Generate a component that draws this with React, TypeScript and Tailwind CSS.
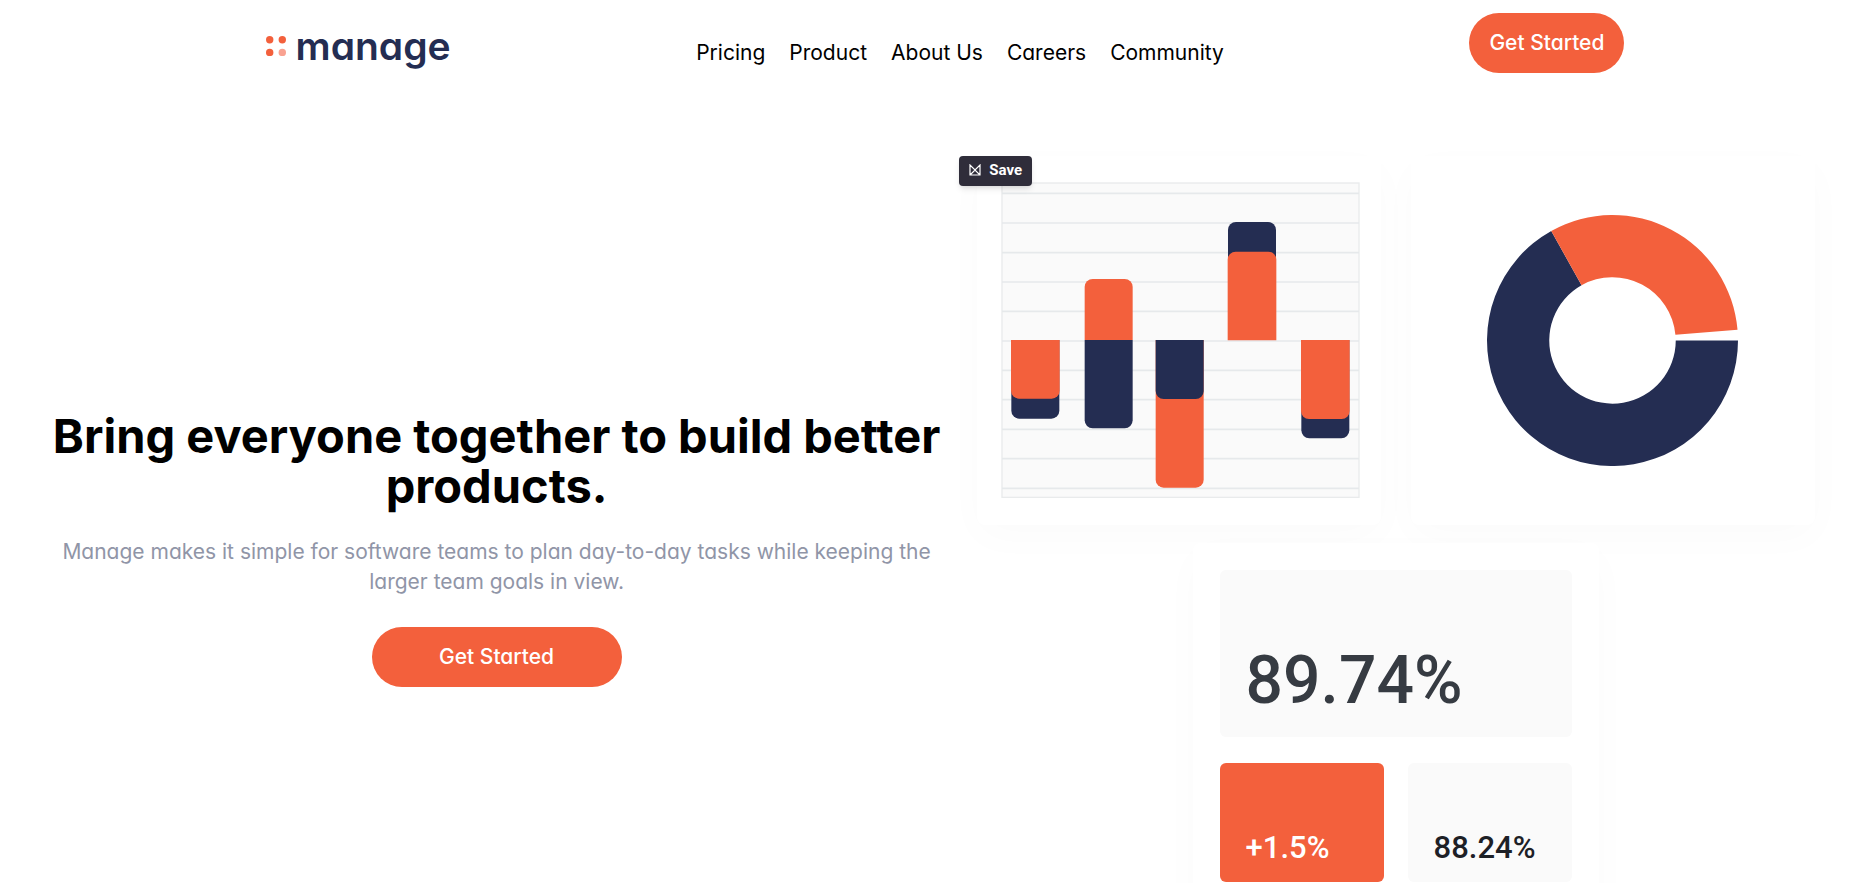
import type { ReactNode } from "react";

const links = ["Pricing", "Product", "About Us", "Careers", "Community"];
const gridLines = [161, 250, 339, 427, 515, 604, 692, 780, 869, 957, 1046];

function Logo() {
  return (
    <a href="#" className="flex items-center gap-2.5">
      <svg viewBox="0 0 20 20" className="h-5 w-5" aria-hidden="true">
        <circle cx="3.7" cy="3.7" r="3.7" fill="#f3603c" />
        <circle cx="16.3" cy="3.7" r="3.7" fill="#f3603c" />
        <circle cx="3.7" cy="16.4" r="3.7" fill="#f3603c" />
        <circle cx="16.3" cy="16.4" r="3.7" fill="#f9a291" />
      </svg>
      <span className="text-[39px] leading-[46px] font-semibold text-[#242d52]">manage</span>
    </a>
  );
}

function BarChart() {
  return (
    <svg viewBox="184 127 1077 949" className="w-[359px]" role="img" aria-label="Bar chart">
      <rect x="187" y="130" width="1071" height="943" fill="#fafafa" stroke="#e9ebec" strokeWidth="4" />
      {gridLines.map((y) => (
        <line key={y} x1="187" x2="1258" y1={y} y2={y} stroke="#e6e9eb" strokeWidth="5" />
      ))}
      <g fill="#242d52">
        <path d="M215 601h144v212a24 24 0 0 1-24 24h-96a24 24 0 0 1-24-24z" />
        <path d="M435 601h144v241a24 24 0 0 1-24 24h-96a24 24 0 0 1-24-24z" />
        <path d="M865 400v-129a24 24 0 0 1 24-24h96a24 24 0 0 1 24 24v129z" />
        <path d="M1085 601h144v271a24 24 0 0 1-24 24h-96a24 24 0 0 1-24-24z" />
      </g>
      <g fill="#f3603c">
        <path d="M214 601h146v152a24 24 0 0 1-24 24h-98a24 24 0 0 1-24-24z" />
        <path d="M435 601v-159a24 24 0 0 1 24-24h96a24 24 0 0 1 24 24v159z" />
        <path d="M648 601h144v419a24 24 0 0 1-24 24h-96a24 24 0 0 1-24-24z" />
        <path d="M864 602v-242a24 24 0 0 1 24-24h98a24 24 0 0 1 24 24v242z" />
        <path d="M1084 601h146v213a24 24 0 0 1-24 24h-98a24 24 0 0 1-24-24z" />
      </g>
      <path d="M648 601h144v153a24 24 0 0 1-24 24h-96a24 24 0 0 1-24-24z" fill="#242d52" />
    </svg>
  );
}

function DonutChart() {
  return (
    <svg viewBox="-377 -377 754 754" className="w-[251px]" role="img" aria-label="Donut chart">
      <path d="M377 0A377 377 0 1 1-184-329L-93-166A190 190 0 1 0 190 0z" fill="#242d52" />
      <path d="M-184-329A377 377 0 0 1 375.600-32L189-17A190 190 0 0 0-93-166z" fill="#f3603c" />
    </svg>
  );
}

function Card({ children, className }: { children: ReactNode; className: string }) {
  return (
    <div className={`rounded-lg bg-white shadow-[0_12px_40px_rgba(0,0,0,0.018)] ${className}`}>{children}</div>
  );
}

export default function App() {
  return (
    <div className="overflow-x-hidden bg-white font-['Inter',sans-serif] text-black [font-feature-settings:'cv11']">
      <header className="flex h-[86px] items-start justify-evenly pt-[13px] pl-5">
        <div className="pt-2.5">
          <Logo />
        </div>
        <nav className="flex gap-6 pt-[25px] text-[21px] leading-[30px]">
          {links.map((label) => (
            <a key={label} href="#">
              {label}
            </a>
          ))}
        </nav>
        <button type="button" className="h-[60px] rounded-full bg-[#f3603c] px-5 text-[21px] font-medium text-white">
          Get Started
        </button>
      </header>

      <main className="grid grid-cols-[53fr_50fr] items-center pt-[70px] pr-[38px] pl-[34px]">
        <section className="flex flex-col items-center px-4 pb-1 text-center">
          <h1 className="text-[47px] leading-[50px] font-bold">Bring everyone together to build better products.</h1>
          <p className="mt-[26px] px-2 text-[21px] leading-[30px] text-[#9095a7]">
            Manage makes it simple for software teams to plan day-to-day tasks while keeping the larger team goals in
            view.
          </p>
          <button
            type="button"
            className="mt-[30px] h-[60px] w-[250px] rounded-full bg-[#f3603c] text-[21px] font-medium text-white"
          >
            Get Started
          </button>
        </section>

        <section className="relative flex flex-col items-center gap-[18px] pb-9">
          <div className="flex gap-[30px]">
            <Card className="flex h-[369px] w-[404px] items-center justify-end pr-[21px]">
              <BarChart />
            </Card>
            <Card className="flex h-[369px] w-[404px] items-center justify-center">
              <DonutChart />
            </Card>
          </div>
          <Card className="grid w-[406px] grid-cols-2 gap-x-6 gap-y-[26px] p-[27px] font-['Roboto',sans-serif] font-medium">
            <div className="col-span-2 flex h-[167px] items-end rounded-md bg-[#fafafa] px-[26px] pb-[18px] text-[66px] leading-[76px] text-[#363b42]">
              89.74%
            </div>
            <div className="flex h-[119px] items-end rounded-md bg-[#f3603c] px-[26px] pb-4 text-[31px] leading-[36px] text-white">
              +1.5%
            </div>
            <div className="flex h-[119px] items-end rounded-md bg-[#fafafa] px-[26px] pb-4 text-[31px] leading-[36px] text-[#1d2026]">
              88.24%
            </div>
          </Card>

          <button
            type="button"
            className="absolute top-0 left-0 flex h-[30px] w-[73px] items-center justify-center gap-2 rounded bg-[#2f2d3a] pb-0.5 font-['Roboto',sans-serif] text-[15px] font-bold text-white shadow-md"
          >
            <svg viewBox="0 0 12 12" className="h-3 w-3" fill="none" stroke="currentColor" strokeWidth="1.2" aria-hidden="true">
              <path d="M1 1v10h10V1L6 6z M1 11l5-5 5 5" />
            </svg>
            Save
          </button>
        </section>
      </main>
    </div>
  );
}
